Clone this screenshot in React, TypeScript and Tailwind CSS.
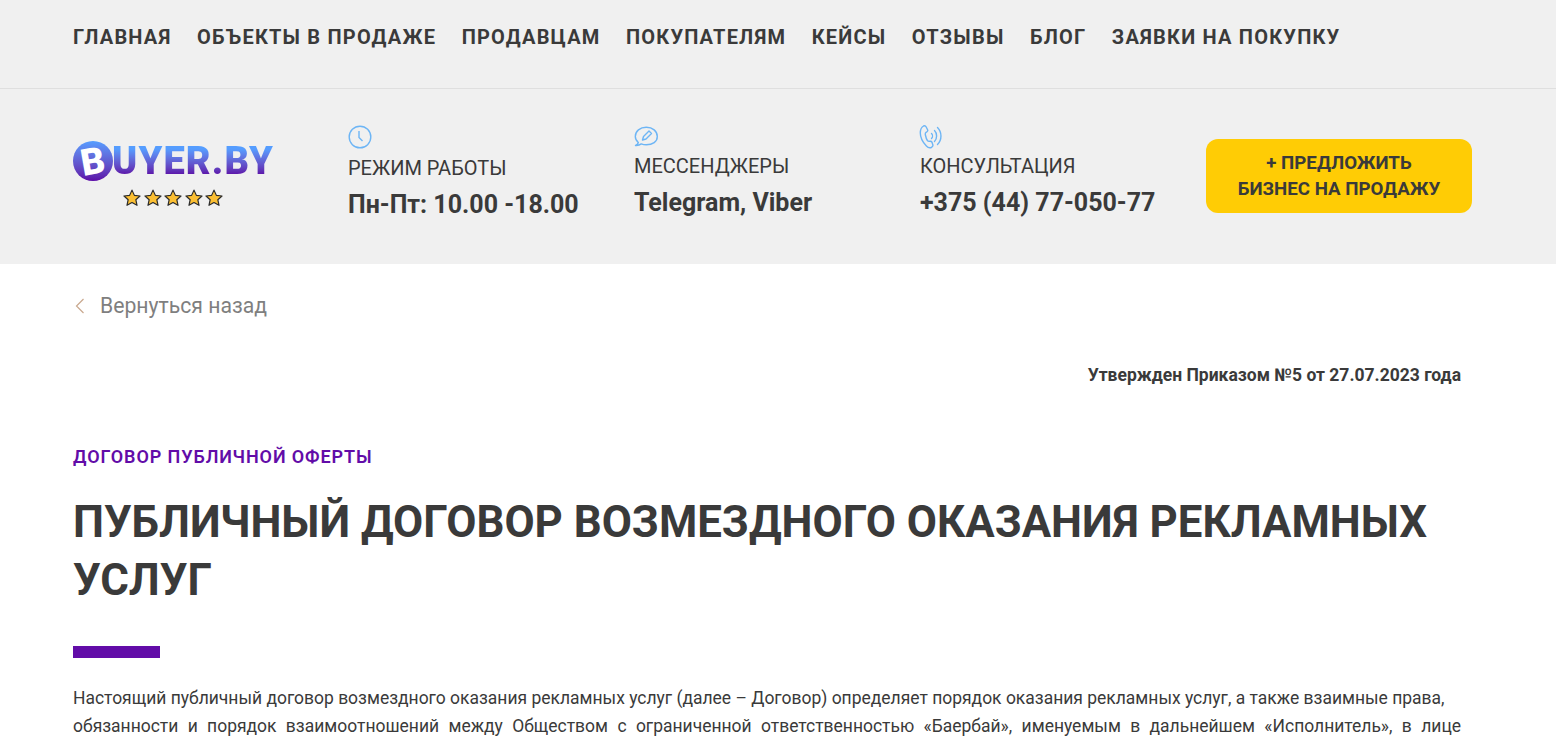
const navItems = ['ГЛАВНАЯ', 'ОБЪЕКТЫ В ПРОДАЖЕ', 'ПРОДАВЦАМ', 'ПОКУПАТЕЛЯМ', 'КЕЙСЫ', 'ОТЗЫВЫ', 'БЛОГ', 'ЗАЯВКИ НА ПОКУПКУ'];

function Star() {
  return (
    <svg width="18" height="18" viewBox="0 0 24 24">
      <path
        d="M12 1.500l3.200 7 7.500.8-5.600 5 1.600 7.400L12 18l-6.700 3.700 1.600-7.400-5.600-5 7.500-.8z"
        fill="#fbbf33"
        stroke="#2b2b2b"
        strokeWidth="1.600"
        strokeLinejoin="round"
      />
    </svg>
  );
}

function Logo() {
  return (
    <div className="w-[275px] shrink-0 flex flex-col mt-[-2px]">
      <div className="flex items-center h-[40px]">
        <div className="w-[40px] h-[40px] rounded-full bg-gradient-to-b from-[#559dff] to-[#5c0aa8] flex items-center justify-center shrink-0">
          <span className="text-white text-[37px] leading-none font-black rotate-[-10deg]">B</span>
        </div>
        <span className="text-[38px] leading-[40px] font-black tracking-[1.150px] bg-gradient-to-b from-[#559dff] from-[20%] to-[#5c0aa8] to-[85%] bg-clip-text text-transparent ml-[-1px]">
          UYER.BY
        </span>
      </div>
      <div className="flex w-[200px] justify-center gap-[2.500px] mt-[8px]">
        <Star />
        <Star />
        <Star />
        <Star />
        <Star />
      </div>
    </div>
  );
}

function ClockIcon() {
  return (
    <svg width="24" height="24" viewBox="0 0 24 24" fill="none" stroke="#6db5f5" strokeWidth="1.400">
      <circle cx="12" cy="12" r="10.800" />
      <path d="M11 6v6.500l3.500 3.500" />
    </svg>
  );
}

function ChatIcon() {
  return (
    <svg width="24" height="24" viewBox="0 0 24 24" fill="none" stroke="#6db5f5" strokeWidth="1.400" strokeLinejoin="round">
      <path d="M1.500 21.500c1.500-.5 2.500-1.500 2.800-3C2.300 16.800 1.300 14.800 1.300 12.500 1.300 7.200 6 3.200 12.300 3.200s11 4 11 9.300-4.700 8.300-11 8.300c-1.800 0-3.500-.3-5-.9-1.500 1.200-3.500 1.800-5.800 1.600z" />
      <path d="M8.500 16l1-3.500 5.500-5.500 2.500 2.500-5.500 5.500z" />
    </svg>
  );
}

function PhoneIcon() {
  return (
    <svg width="24" height="24" viewBox="0 0 24 24" fill="none" stroke="#6db5f5" strokeWidth="1.400" strokeLinecap="round" strokeLinejoin="round" className="ml-[-1px] translate-y-[1px]">
      <path d="M4.500 1c1-.4 2.200 0 2.700 1l1.500 3c.4 1-.4 1.800-1.800 2.500-.8.600-.7 1.500-.5 2.500.4 2 1 4 2 5.500.6.800 1.300 1 2.300.8 1-.2 1.800 0 2.200.8l1 2.900c.2 1-.5 1.800-1.500 2.500-1.500.6-3.500.2-5-1.500C4 17.500 1.300 12 1.300 8c0-3 1-5.800 3.200-7z" />
      <path d="M12.500 8.500c1.300 1.300 1.300 3.700 0 5" />
      <path d="M15.500 5.500c2.800 2.800 2.800 8.200 0 11" />
      <path d="M18.500 2.500c4.600 4.600 4.600 12.400 0 17" />
    </svg>
  );
}

function InfoColumn({ icon, label, value, offset, labelGap }: { icon: React.ReactNode; label: string; value: string; offset: string; labelGap: string }) {
  return (
    <div className={`w-[286px] shrink-0 ${offset}`}>
      <div className="h-[24px]">{icon}</div>
      <div className={`text-[20px] leading-[24px] text-[#3a3a3a] ${labelGap}`}>{label}</div>
      <div className="text-[25px] leading-[30px] font-bold text-[#3a3a3a] mt-[10px]">{value}</div>
    </div>
  );
}

export default function App() {
  return (
    <div className="h-[746px] overflow-hidden bg-white text-[#3a3a3a]" style={{ fontFamily: 'Roboto, sans-serif' }}>
      {/* Top nav */}
      <nav className="h-[89px] bg-[#f0f0f0] border-b border-[#dfdfdf] px-[73px] pt-[25px] flex gap-[25.500px]">
        {navItems.map((item) => (
          <a key={item} className="text-[20px] leading-[24px] font-bold tracking-[1.200px] text-[#3a3a3a] whitespace-nowrap">
            {item}
          </a>
        ))}
      </nav>

      {/* Contacts */}
      <header className="h-[175px] bg-[#f0f0f0] pl-[73px] flex items-start pt-[36px]">
        <div className="pt-[18px]">
          <Logo />
        </div>
        <InfoColumn icon={<ClockIcon />} label="РЕЖИМ РАБОТЫ" value="Пн-Пт: 10.00 -18.00" offset="" labelGap="mt-[7px]" />
        <InfoColumn icon={<ChatIcon />} label="МЕССЕНДЖЕРЫ" value="Telegram, Viber" offset="mt-[-1px]" labelGap="mt-[6px]" />
        <InfoColumn icon={<PhoneIcon />} label="КОНСУЛЬТАЦИЯ" value="+375 (44) 77-050-77" offset="mt-[-1px]" labelGap="mt-[6px]" />
        <button className="w-[266px] h-[74px] mt-[14px] rounded-[12px] bg-[#ffcc05] text-[18.700px] leading-[26px] font-bold text-[#3a3a3a] shrink-0">
          + ПРЕДЛОЖИТЬ
          <br />
          БИЗНЕС НА ПРОДАЖУ
        </button>
      </header>

      {/* Content */}
      <main className="px-[73px]">
        <a className="flex items-center h-[24px] mt-[30px] text-[21.200px] leading-[24px] text-[#7f7f7f]">
          <svg width="10" height="16" viewBox="0 0 10 16" fill="none" stroke="#c9a88e" strokeWidth="1.200" className="ml-[2px] mr-[15px]">
            <path d="M8.500 1L1.500 8l7 7" />
          </svg>
          Вернуться назад
        </a>

        <p className="text-right pr-[22px] mt-[45px] text-[17.500px] leading-[24px] font-bold text-[#3a3a3a]">
          Утвержден Приказом №5 от 27.07.2023 года
        </p>

        <p className="mt-[58px] text-[18px] leading-[24px] font-semibold tracking-[0.900px] text-[#620ca8]">
          ДОГОВОР ПУБЛИЧНОЙ ОФЕРТЫ
        </p>

        <h1 className="mt-[24px] text-[43.800px] leading-[58px] font-bold text-[#3a3a3a] pr-[22px]">
          ПУБЛИЧНЫЙ ДОГОВОР ВОЗМЕЗДНОГО ОКАЗАНИЯ РЕКЛАМНЫХ УСЛУГ
        </h1>

        <div className="w-[87px] h-[12px] bg-[#620ca8] mt-[37px]" />

        <p className="mt-[26px] w-[1388px] text-[17.480px] leading-[28px] text-justify text-[#3a3a3a]">
          Настоящий публичный договор возмездного оказания рекламных услуг (далее – Договор) определяет порядок оказания рекламных услуг, а также взаимные права,
          <br />
          обязанности и порядок взаимоотношений между Обществом с ограниченной ответственностью «Баербай», именуемым в дальнейшем «Исполнитель», в лице директора, действующего на основании Устава, и юридическим или физическим лицом, принявшим условия настоящего Договора, именуемым в дальнейшем «Заказчик».
        </p>
      </main>
    </div>
  );
}
